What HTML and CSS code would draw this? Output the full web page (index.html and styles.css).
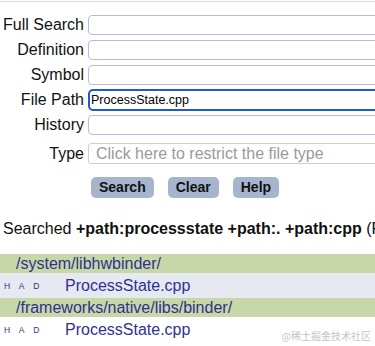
FILE: index.html
```html
<!DOCTYPE html>
<html>

<head>
    <title>Search</title>
    <link rel="stylesheet" href="styles.css">
</head>
<body>
    <div class="top-rule"></div>
    <form class="search-form">
        <div class="field-row">
            <label class="field-label">Full Search</label>
            <input type="text" class="field-input">
        </div>
        <div class="field-row">
            <label class="field-label">Definition</label>
            <input type="text" class="field-input">
        </div>
        <div class="field-row">
            <label class="field-label">Symbol</label>
            <input type="text" class="field-input">
        </div>
        <div class="field-row">
            <label class="field-label">File Path</label>
            <input type="text" class="field-input focused" value="ProcessState.cpp">
        </div>
        <div class="field-row">
            <label class="field-label">History</label>
            <input type="text" class="field-input">
        </div>
        <div class="field-row type-row">
            <label class="field-label">Type</label>
            <div class="type-select">Click here to restrict the file type</div>
        </div>
        <div class="button-row">
            <span class="form-button">Search</span>
            <span class="form-button">Clear</span>
            <span class="form-button">Help</span>
        </div>
    </form>

    <p class="searched-line">Searched <b>+path:processstate +path:. +path:cpp</b> (R</p>

    <div class="results">
        <div class="dir-row">/system/libhwbinder/</div>
        <div class="file-row shaded">
            <span class="file-tags">H A D</span>
            <span class="file-name">ProcessState.cpp</span>
        </div>
        <div class="dir-row">/frameworks/native/libs/binder/</div>
        <div class="file-row">
            <span class="file-tags">H A D</span>
            <span class="file-name">ProcessState.cpp</span>
        </div>
    </div>

    <div class="watermark">@稀土掘金技术社区</div>
</body>
</html>
```

FILE: styles.css
```css
body {
    margin: 0;
    padding: 0;
    width: 375px;
    height: 346px;
    overflow: hidden;
    position: relative;
    font-family: "Liberation Sans", Arial, sans-serif;
    color: #111;
    background: #fff;
}
.top-rule {
    margin-top: 1px;
    height: 1px;
    background-color: #dcdcdc;
}
.search-form {
    padding-top: 10px;
}
.field-row {
    display: flex;
    align-items: center;
    height: 25px;
}
.field-label {
    width: 84px;
    text-align: right;
    font-size: 16px;
    padding-right: 4px;
    flex-shrink: 0;
}
.field-input {
    box-sizing: border-box;
    width: 300px;
    height: 20px;
    margin: 0;
    flex-shrink: 0;
    border: 1px solid #bcb8dc;
    border-radius: 4px;
    padding: 0 2px;
    font-family: "Liberation Sans", Arial, sans-serif;
    font-size: 12.5px;
    color: #000;
    outline: none;
}
.field-input.focused {
    height: 22px;
    border: 2px solid #1c5cc8;
    border-radius: 5px;
    padding: 0 1px;
}
.type-row {
    height: 25px;
    margin-top: 4px;
}
.type-select {
    box-sizing: border-box;
    width: 300px;
    height: 21px;
    flex-shrink: 0;
    border: 1px solid #cfcfcf;
    border-radius: 3px;
    padding: 0 7px;
    font-size: 16px;
    line-height: 19px;
    color: #9a9a9a;
    white-space: nowrap;
}
.button-row {
    display: flex;
    gap: 14px;
    padding-left: 91px;
    margin-top: 11px;
}
.form-button {
    background-color: #a6b5cd;
    border-radius: 5px;
    padding: 0 8px;
    height: 21px;
    line-height: 21px;
    font-size: 14px;
    font-weight: bold;
    color: #111;
}
.searched-line {
    margin: 21px 0 0 3px;
    font-size: 16px;
    line-height: 19px;
    white-space: nowrap;
}
.results {
    margin-top: 16px;
}
.dir-row {
    background-color: #c8d7a7;
    height: 19px;
    line-height: 19px;
    padding-left: 16px;
    font-size: 16px;
    color: #2f3190;
    white-space: nowrap;
}
.file-row {
    display: flex;
    align-items: center;
    height: 25px;
}
.file-row.shaded {
    background-color: #e6e9f2;
}
.file-tags {
    width: 61px;
    padding-left: 4px;
    font-size: 8.5px;
    letter-spacing: 3.4px;
    color: #2f3190;
}
.file-name {
    font-size: 16px;
    color: #2f3190;
}
.watermark {
    position: absolute;
    right: 4px;
    bottom: 3px;
    font-family: "Noto Sans CJK SC", sans-serif;
    font-size: 10px;
    color: #c4c4c4;
}
```
